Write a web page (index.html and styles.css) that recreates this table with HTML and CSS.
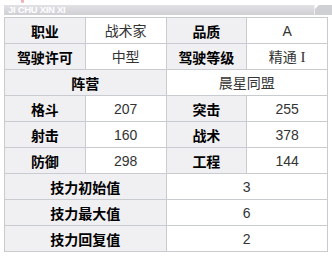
FILE: index.html
```html
<!DOCTYPE html>
<html>
<head>
<meta charset="utf-8">
<link rel="stylesheet" href="styles.css">
</head>
<body>
<div class="panel">
  <div class="mark"></div>
  <div class="titlebar">
    <div class="title">JI CHU XIN XI</div>
    <div class="corner"></div>
  </div>
  <table class="info">
    <tr><th>职业</th><td>战术家</td><th>品质</th><td>A</td></tr>
    <tr><th>驾驶许可</th><td>中型</td><th>驾驶等级</th><td>精通 <span class="roman">I</span></td></tr>
    <tr><th colspan="2">阵营</th><td colspan="2">晨星同盟</td></tr>
    <tr><th>格斗</th><td class="num">207</td><th>突击</th><td class="num">255</td></tr>
    <tr><th>射击</th><td class="num">160</td><th>战术</th><td class="num">378</td></tr>
    <tr><th>防御</th><td class="num">298</td><th>工程</th><td class="num">144</td></tr>
    <tr><th colspan="2">技力初始值</th><td colspan="2" class="num">3</td></tr>
    <tr><th colspan="2">技力最大值</th><td colspan="2" class="num">6</td></tr>
    <tr><th colspan="2">技力回复值</th><td colspan="2" class="num">2</td></tr>
  </table>
</div>
</body>
</html>
```
FILE: styles.css
```css
html, body {
  margin: 0;
  padding: 0;
  background: #ffffff;
}
.panel {
  position: relative;
  width: 332px;
  height: 259px;
  padding-top: 5px;
  box-sizing: border-box;
}
.mark {
  position: absolute;
  left: 21px;
  top: 0;
  width: 3px;
  height: 3px;
  background: #f4b0b8;
  border-radius: 0 0 2px 2px;
}
.titlebar {
  display: flex;
  height: 10px;
  margin-left: 4px;
}
.title {
  flex: 1;
  background: linear-gradient(#e2e2e6, #cfd0d4);
  border-right: 1px solid #eeeef0;
  color: #ffffff;
  font-family: "Liberation Sans", Arial, sans-serif;
  font-size: 9.5px;
  font-weight: bold;
  line-height: 10px;
  padding-left: 4px;
  letter-spacing: -0.3px;
}
.corner {
  width: 17px;
  background: #cfd0d4;
  clip-path: polygon(4px 0, 100% 0, 100% 100%, 0 100%, 0 4px);
}
.info {
  margin: 2px 0 0 4px;
  border-collapse: collapse;
  width: 324px;
  table-layout: fixed;
}
.info th, .info td {
  border: 1px solid #c8ccd1;
  height: 25px;
  padding: 0;
  text-align: center;
  font-size: 14px;
  line-height: 18px;
}
.info th {
  background: #f0f0f3;
  color: #000000;
  font-family: "Noto Sans CJK SC", sans-serif;
  font-weight: bold;
}
.info td {
  background: #ffffff;
  color: #333333;
  font-family: "Liberation Sans", "Noto Sans CJK SC", sans-serif;
}
.roman {
  font-family: "Liberation Serif", serif;
  font-size: 15px;
}
```
